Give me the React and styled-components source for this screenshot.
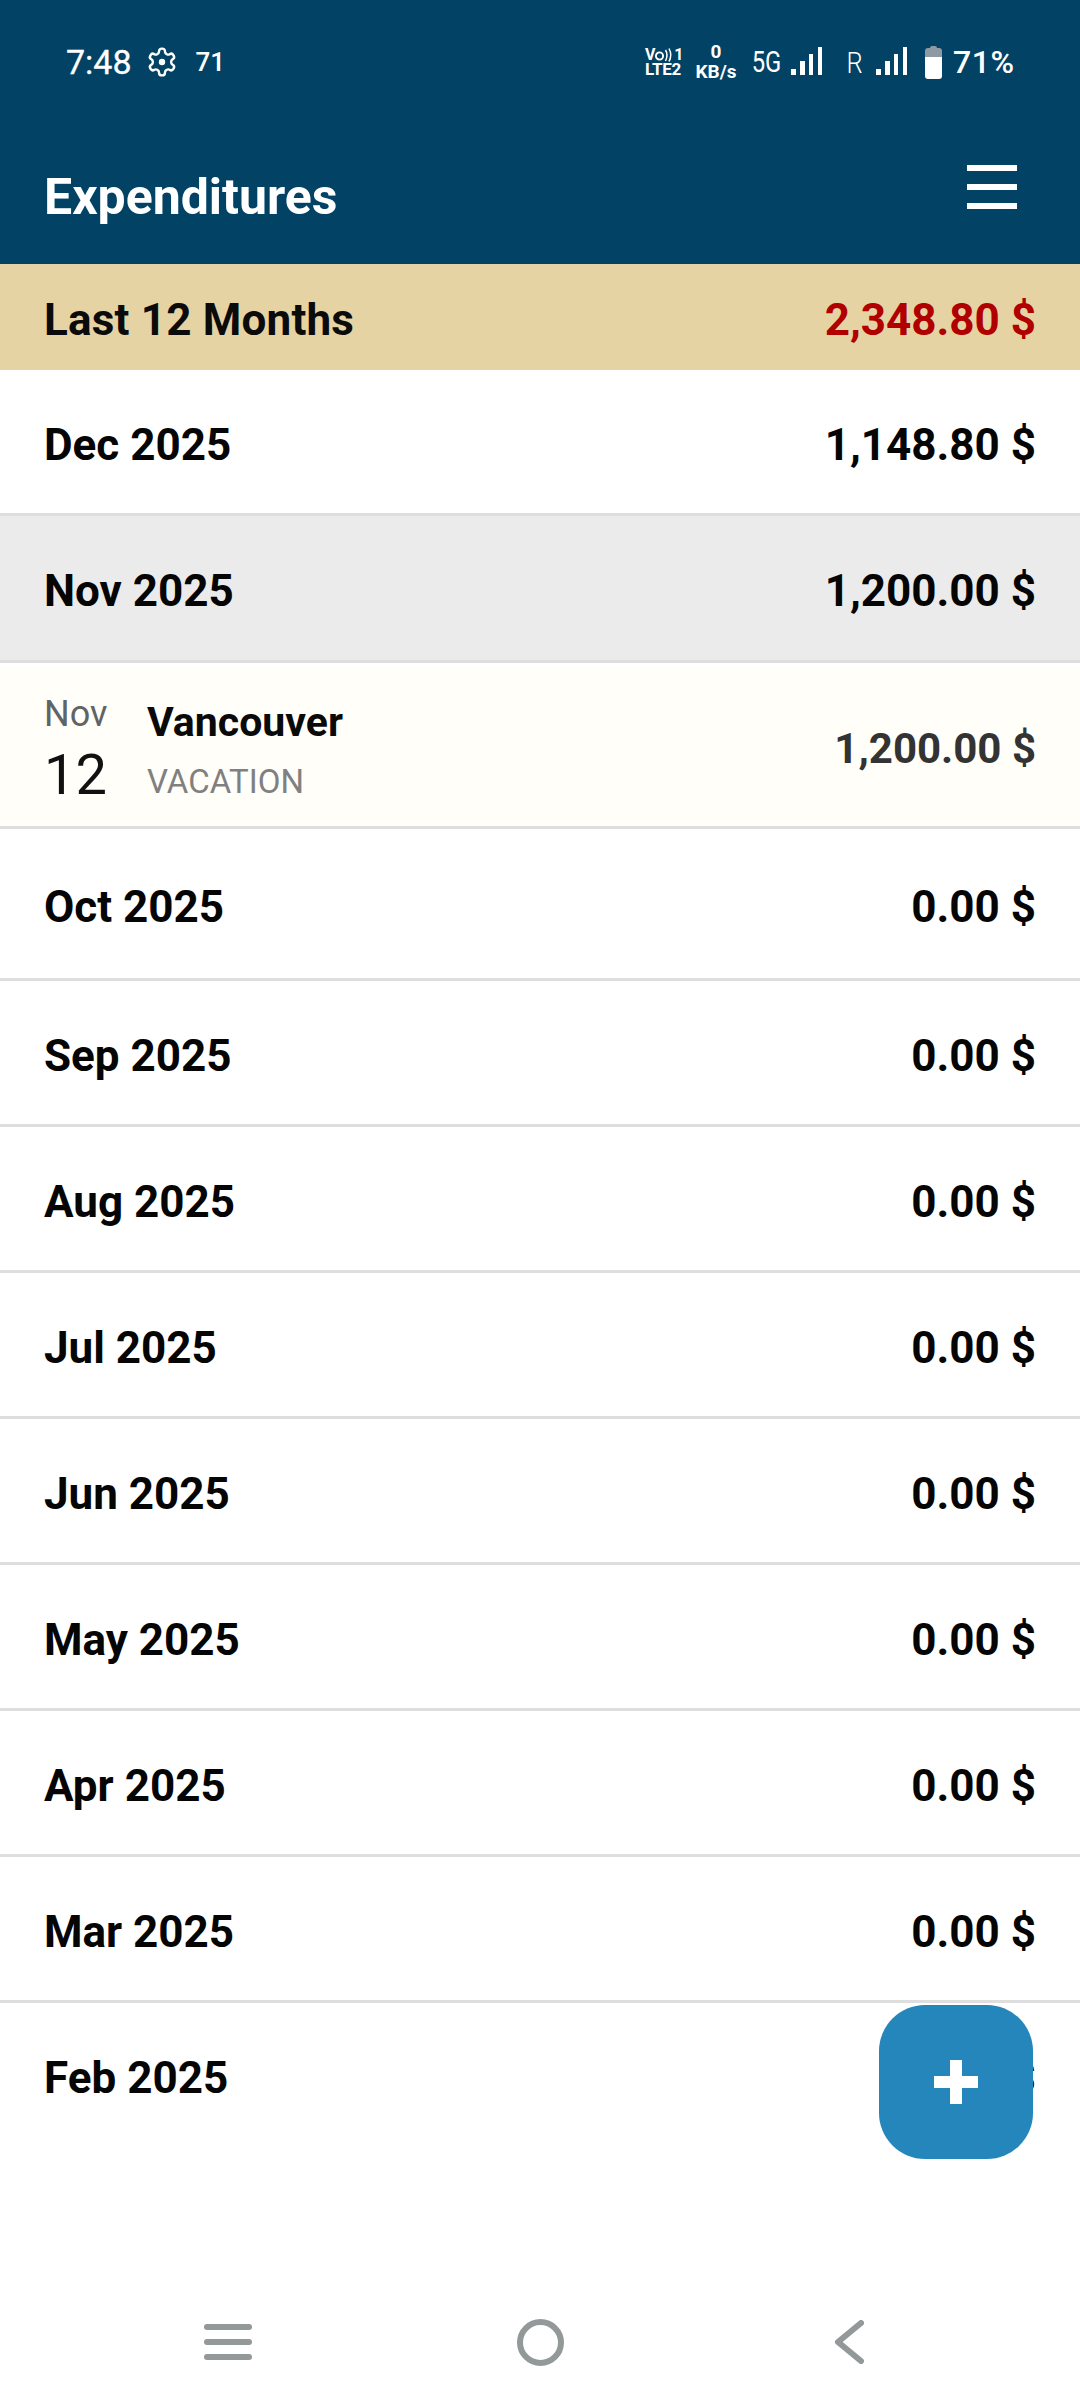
import React from 'react'
import styled, { createGlobalStyle } from 'styled-components'

const months = [
  { label: 'Oct 2025', amount: '0.00 $', tall: true },
  { label: 'Sep 2025', amount: '0.00 $' },
  { label: 'Aug 2025', amount: '0.00 $' },
  { label: 'Jul 2025', amount: '0.00 $' },
  { label: 'Jun 2025', amount: '0.00 $' },
  { label: 'May 2025', amount: '0.00 $' },
  { label: 'Apr 2025', amount: '0.00 $' },
  { label: 'Mar 2025', amount: '0.00 $' },
]

function Signal({ left }) {
  return (
    <SignalIcon $left={left} width="31" height="28" viewBox="0 0 31 28" fill="#fff">
      <rect x="0" y="22" width="5" height="6" />
      <rect x="9" y="14" width="5" height="14" />
      <rect x="18" y="7" width="4" height="21" />
      <rect x="27" y="0" width="4" height="28" />
    </SignalIcon>
  )
}

function Gear() {
  return (
    <svg width="32" height="32" viewBox="0 0 24 24" fill="none" stroke="#fff" strokeWidth="1.8" strokeLinecap="round" strokeLinejoin="round">
      <path d="M12.22 2h-.44a2 2 0 0 0-2 2v.18a2 2 0 0 1-1 1.73l-.43.25a2 2 0 0 1-2 0l-.15-.08a2 2 0 0 0-2.73.73l-.22.38a2 2 0 0 0 .73 2.73l.15.1a2 2 0 0 1 1 1.72v.51a2 2 0 0 1-1 1.74l-.15.09a2 2 0 0 0-.73 2.73l.22.38a2 2 0 0 0 2.73.73l.15-.08a2 2 0 0 1 2 0l.43.25a2 2 0 0 1 1 1.73V20a2 2 0 0 0 2 2h.44a2 2 0 0 0 2-2v-.18a2 2 0 0 1 1-1.73l.43-.25a2 2 0 0 1 2 0l.15.08a2 2 0 0 0 2.73-.73l.22-.39a2 2 0 0 0-.73-2.73l-.15-.08a2 2 0 0 1-1-1.74v-.5a2 2 0 0 1 1-1.74l.15-.09a2 2 0 0 0 .73-2.73l-.22-.38a2 2 0 0 0-2.73-.73l-.15.08a2 2 0 0 1-2 0l-.43-.25a2 2 0 0 1-1-1.73V4a2 2 0 0 0-2-2z" />
      <circle cx="12" cy="12" r="2.4" fill="#fff" stroke="none" />
    </svg>
  )
}

function Battery() {
  return (
    <BatteryIcon width="17" height="33" viewBox="0 0 17 33">
      <path d="M5 2 Q5 0 7 0 H10 Q12 0 12 2 H14 Q17 2 17 5 V11 H0 V5 Q0 2 3 2 Z" fill="#8d9aa3" />
      <path d="M0 11 H17 V30 Q17 33 14 33 H3 Q0 33 0 30 Z" fill="#fff" />
    </BatteryIcon>
  )
}

function VolteWaves() {
  return (
    <svg width="19" height="14" viewBox="0 0 19 14" fill="none" stroke="#fff" strokeWidth="1.5">
      <circle cx="4.5" cy="8" r="3.6" strokeWidth="1.9" />
      <path d="M10.5 2 Q13.5 7 10.5 13" />
      <path d="M14 0.5 Q17.5 7 14 13.5" />
    </svg>
  )
}

export default function App() {
  return (
    <Page>
      <GlobalStyle />
      <Header>
        <StatusBar>
          <StatusLeft>
            <Clock>7:48</Clock>
            <Gear />
            <Badge>71</Badge>
          </StatusLeft>
          <StatusRight>
            <Volte>
              <VolteTop>V<VolteWaves /><span>1</span></VolteTop>
              <span>LTE2</span>
            </Volte>
            <Speed>
              <span>0</span>
              <span>KB/s</span>
            </Speed>
            <Network>5G</Network>
            <Signal left={11} />
            <Roaming>R</Roaming>
            <Signal left={14} />
            <Battery />
            <Percent>71%</Percent>
          </StatusRight>
        </StatusBar>
        <TitleBar>
          <Title>Expenditures</Title>
          <MenuButton>
            <MenuLine />
            <MenuLine />
            <MenuLine />
          </MenuButton>
        </TitleBar>
      </Header>

      <Summary>
        <SummaryLabel>Last 12 Months</SummaryLabel>
        <SummaryAmount>2,348.80 $</SummaryAmount>
      </Summary>

      <MonthRow $height={146}>
        <span>Dec 2025</span>
        <span>1,148.80 $</span>
      </MonthRow>
      <MonthRow $height={147} $open>
        <span>Nov 2025</span>
        <span>1,200.00 $</span>
      </MonthRow>

      <Expense>
        <DateBlock>
          <DateMonth>Nov</DateMonth>
          <DateDay>12</DateDay>
        </DateBlock>
        <ExpenseInfo>
          <ExpenseName>Vancouver</ExpenseName>
          <ExpenseType>VACATION</ExpenseType>
        </ExpenseInfo>
        <ExpenseAmount>1,200.00 $</ExpenseAmount>
      </Expense>

      {months.map((m) => (
        <MonthRow key={m.label} $height={m.tall ? 152 : 146}>
          <span>{m.label}</span>
          <span>{m.amount}</span>
        </MonthRow>
      ))}
      <MonthRow $height={146} $last>
        <span>Feb 2025</span>
        <span>0.00 $</span>
      </MonthRow>

      <Fab>
        <FabPlus />
      </Fab>

      <NavBar>
        <NavLines>
          <NavLine />
          <NavLine />
          <NavLine />
        </NavLines>
        <NavHome />
        <svg width="30" height="44" viewBox="0 0 30 44" fill="none" stroke="#939999" strokeWidth="6" strokeLinecap="round" strokeLinejoin="round">
          <path d="M27 3 L4 22 L27 41" />
        </svg>
      </NavBar>
    </Page>
  )
}

const GlobalStyle = createGlobalStyle`
  html, body {
    margin: 0;
    padding: 0;
    background: #fff;
    font-family: Roboto, "Liberation Sans", sans-serif;
  }
  * {
    box-sizing: border-box;
  }
`
const Page = styled.div`
  position: relative;
  width: 1080px;
  height: 2400px;
  overflow: hidden;
  display: flex;
  flex-direction: column;
  background: #fff;
`
const Header = styled.header`
  height: 264px;
  background: #024265;
  color: #fff;
  display: flex;
  flex-direction: column;
`
const StatusBar = styled.div`
  height: 124px;
  padding: 0 66px 0 66px;
  display: flex;
  align-items: center;
  justify-content: space-between;
`
const StatusLeft = styled.div`
  display: flex;
  align-items: center;
  gap: 14px;
`
const Clock = styled.span`
  font-size: 34px;
  font-weight: 400;
  -webkit-text-stroke: 0.3px #fff;
`
const Badge = styled.span`
  font-size: 26px;
  font-weight: 500;
  margin-left: 4px;
`
const StatusRight = styled.div`
  display: flex;
  align-items: center;
`
const Volte = styled.div`
  width: 37px;
  display: flex;
  flex-direction: column;
  align-items: flex-start;
  font-size: 17px;
  line-height: 14px;
  font-weight: 700;
  letter-spacing: -0.3px;
`
const VolteTop = styled.div`
  display: flex;
  align-items: center;
  height: 14px;
  font-size: 16px;
`
const Speed = styled.div`
  width: 40px;
  margin-left: 14px;
  display: flex;
  flex-direction: column;
  align-items: center;
  font-size: 19px;
  line-height: 20px;
  font-weight: 700;
  white-space: nowrap;
`
const Network = styled.span`
  width: 27px;
  margin-left: 17px;
  display: flex;
  justify-content: center;
  font-size: 29px;
  transform: scaleX(0.82);
`
const SignalIcon = styled.svg`
  flex: none;
  margin-left: ${(p) => p.$left}px;
  margin-bottom: 3px;
`
const Roaming = styled.span`
  width: 15px;
  margin-left: 25px;
  display: flex;
  justify-content: center;
  font-size: 30px;
  font-weight: 300;
  transform: scaleX(0.85);
`
const BatteryIcon = styled.svg`
  flex: none;
  margin-left: 18px;
`
const Percent = styled.span`
  width: 61px;
  margin-left: 11px;
  font-size: 32px;
  font-weight: 500;
  letter-spacing: 0.5px;
  white-space: nowrap;
`
const TitleBar = styled.div`
  flex: 1;
  padding: 0 63px 0 44px;
  display: flex;
  align-items: flex-start;
  justify-content: space-between;
`
const Title = styled.h1`
  margin: 45px 0 0;
  font-size: 50px;
  line-height: 56px;
  font-weight: 700;
`
const MenuButton = styled.div`
  margin-top: 41px;
  width: 50px;
  display: flex;
  flex-direction: column;
  gap: 13px;
`
const MenuLine = styled.div`
  height: 6px;
  background: #fff;
`
const Summary = styled.div`
  height: 106px;
  padding: 6px 44px 0;
  background: #e6d3a3;
  display: flex;
  align-items: center;
  justify-content: space-between;
  font-size: 44px;
  font-weight: 700;
`
const SummaryLabel = styled.span`
  color: #0b0b0b;
  letter-spacing: 0.2px;
`
const SummaryAmount = styled.span`
  color: #b00000;
`
const MonthRow = styled.div`
  flex: none;
  height: ${(p) => p.$height}px;
  padding: 6px 44px 0;
  display: flex;
  align-items: center;
  justify-content: space-between;
  background: ${(p) => (p.$open ? '#ebebeb' : '#fff')};
  border-bottom: 3px solid ${(p) => (p.$last ? 'transparent' : '#dedede')};
  font-size: 44px;
  font-weight: 700;
  color: #050505;
`
const Expense = styled.div`
  flex: none;
  height: 158px;
  margin: 5px 0 3px;
  padding: 0 44px;
  background: #fffef9;
  display: flex;
  align-items: center;
  box-shadow: 0 3px 0 #dedede;
`
const DateBlock = styled.div`
  width: 103px;
  margin-top: 6px;
  display: flex;
  flex-direction: column;
  gap: 9px;
`
const DateMonth = styled.span`
  font-size: 36px;
  line-height: 40px;
  color: #5f6466;
`
const DateDay = styled.span`
  font-size: 56px;
  line-height: 64px;
  color: #111;
`
const ExpenseInfo = styled.div`
  flex: 1;
  margin-top: 7px;
  display: flex;
  flex-direction: column;
  gap: 19px;
`
const ExpenseName = styled.span`
  font-size: 41px;
  line-height: 44px;
  font-weight: 700;
  color: #0a0a0a;
`
const ExpenseType = styled.span`
  font-size: 33px;
  line-height: 38px;
  color: #808080;
`
const ExpenseAmount = styled.span`
  margin-top: 3px;
  font-size: 42px;
  font-weight: 700;
  color: #333;
`
const Fab = styled.div`
  position: absolute;
  top: 2005px;
  left: 879px;
  width: 154px;
  height: 154px;
  border-radius: 46px;
  background: #2586bb;
  display: flex;
  align-items: center;
  justify-content: center;
`
const FabPlus = styled.div`
  position: relative;
  width: 44px;
  height: 44px;
  &::before,
  &::after {
    content: '';
    position: absolute;
    background: #fff;
  }
  &::before {
    left: 0;
    right: 0;
    top: 16px;
    height: 12px;
  }
  &::after {
    top: 0;
    bottom: 0;
    left: 16px;
    width: 12px;
  }
`
const NavBar = styled.nav`
  margin-top: auto;
  height: 100px;
  padding: 0 216px 16px 204px;
  display: flex;
  align-items: center;
  justify-content: space-between;
`
const NavLines = styled.div`
  width: 48px;
  display: flex;
  flex-direction: column;
  gap: 9px;
`
const NavLine = styled.div`
  height: 6px;
  border-radius: 3px;
  background: #939999;
`
const NavHome = styled.div`
  width: 47px;
  height: 47px;
  margin-right: 5px;
  border: 6px solid #939999;
  border-radius: 50%;
`
